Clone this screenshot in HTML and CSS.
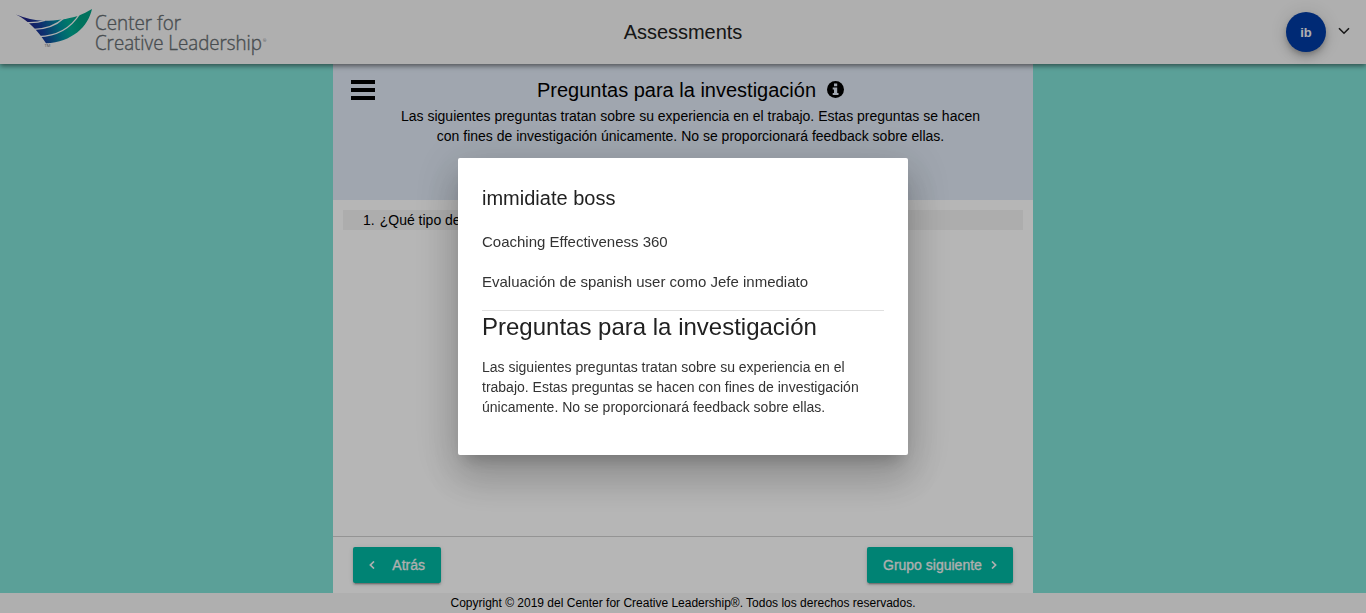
FILE: index.html
```html
<!DOCTYPE html>
<html lang="es">
<head>
<meta charset="utf-8">
<title>Assessments</title>
<link rel="stylesheet" href="styles.css">
</head>
<body>
<div class="app">
  <header class="toolbar">
    <div class="brand">
      <svg class="logo" width="80" height="50" viewBox="12 6 80 50" aria-hidden="true">
        <defs>
          <linearGradient id="wing" gradientUnits="userSpaceOnUse" x1="30" y1="32" x2="78" y2="18">
            <stop offset="0" stop-color="#1f2388"/><stop offset=".25" stop-color="#15409c"/><stop offset=".6" stop-color="#0090a0"/><stop offset=".8" stop-color="#00ab94"/><stop offset="1" stop-color="#00a083"/>
          </linearGradient>
        </defs>
        <path fill="url(#wing)" d="M16 14.6C25 18.5 35 20.6 44 20.8C57 20.6 67 19 77 16.2C83 14 88 11.5 92 9C88 27 72 42 46 43.3C38 31 29 21 16 14.6Z"/>
        <g fill="none" stroke="#f5f5f5" stroke-width="1.4">
          <path d="M24 22.4C32 23 39 22.4 45 20.4"/>
          <path d="M32 29.6C46 29.4 56 25.6 64 18"/>
          <path d="M38.5 36.6C56 36.2 70 29.5 80 13.5"/>
        </g>
        <text class="logo-tm" x="44.5" y="47">TM</text>
      </svg>
      <div class="wordmark">
        <svg width="90" height="20" viewBox="0 0 90 20"><text class="logo-word" x="3" y="16.7" textLength="86" lengthAdjust="spacingAndGlyphs">Center for</text></svg>
        <div class="word-row"><svg width="171" height="23" viewBox="0 0 171 23"><text class="logo-word" x="3" y="16.5" textLength="167" lengthAdjust="spacingAndGlyphs">Creative Leadership</text></svg><span class="reg">®</span></div>
      </div>
    </div>
    <h1 class="app-title">Assessments</h1>
    <div class="account">
      <span class="avatar">ib</span>
      <svg class="chevron" width="12" height="8" viewBox="0 0 12 8"><path d="M1 1.2 6 6.2 11 1.2"/></svg>
    </div>
  </header>
  <main class="page">
    <section class="survey">
      <div class="intro">
        <svg class="menu" width="24" height="20" viewBox="0 0 24 20"><path d="M0 2H24M0 10H24M0 18H24"/></svg>
        <div class="intro-text">
          <h2 class="intro-title"><span class="intro-name">Preguntas para la investigación</span>
            <svg class="info" width="17" height="17" viewBox="0 0 17 17"><circle cx="8.5" cy="8.5" r="8.5"/><path fill="#e0e9f5" d="M7 2.5H10.2V5.2H7ZM5.7 6.6H10.2V12H11.5V14H5.7V12H7V8.6H5.7Z"/></svg>
          </h2>
          <p class="intro-copy"><span class="line">Las siguientes preguntas tratan sobre su experiencia en el trabajo. Estas preguntas se hacen</span><span class="line">con fines de investigación únicamente. No se proporcionará feedback sobre ellas.</span></p>
        </div>
      </div>
      <div class="questions">
        <div class="question"><span>1.</span><span>¿Qué tipo de</span></div>
      </div>
      <div class="actions">
        <button class="btn back"><svg width="6" height="8" viewBox="0 0 6 8"><path d="M5 .5 1.4 4 5 7.5"/></svg>Atrás</button>
        <button class="btn next">Grupo siguiente<svg width="6" height="8" viewBox="0 0 6 8"><path d="M1 .5 4.6 4 1 7.5"/></svg></button>
      </div>
    </section>
  </main>
  <footer class="footer"><span>Copyright © 2019 del Center for Creative Leadership®. Todos los derechos reservados.</span></footer>
</div>
<div class="backdrop">
  <div class="dialog" role="dialog">
    <h3 class="dialog-role">immidiate boss</h3>
    <p class="dialog-line">Coaching Effectiveness 360</p>
    <p class="dialog-line">Evaluación de spanish user como Jefe inmediato</p>
    <div class="divider"></div>
    <h2 class="dialog-title">Preguntas para la investigación</h2>
    <p class="dialog-copy">Las siguientes preguntas tratan sobre su experiencia en el<br>trabajo. Estas preguntas se hacen con fines de investigación<br>únicamente. No se proporcionará feedback sobre ellas.</p>
  </div>
</div>
</body>
</html>
```
FILE: styles.css
```css
* { box-sizing: border-box; }
body { margin: 0; overflow: hidden; font-family: "Liberation Sans", Arial, sans-serif; color: #000; }
h1, h2, h3, p { margin: 0; font-weight: 400; }
.app { height: 613px; display: flex; flex-direction: column; background: #80e1d6; }
.toolbar { position: relative; z-index: 1; flex: none; height: 64px; display: grid; grid-template-columns: 1fr auto 1fr; align-items: center; padding: 0 16px; background: #f5f5f5; box-shadow: 0 2px 5px rgba(0,0,0,.5); }
.brand { display: flex; align-items: center; height: 50px; margin: -3px 0 0 -4px; }
.logo { display: block; flex: none; }
.wordmark { height: 50px; display: flex; flex-direction: column; padding-top: 7px; }
.wordmark svg { display: block; overflow: visible; flex: none; }
.word-row { display: flex; align-items: flex-start; }
.logo-word { font: 300 20.5px "Open Sans", sans-serif; fill: #666d71; stroke: #666d71; stroke-width: .4px; }
.logo-tm { font: 4px "Open Sans", sans-serif; fill: #6d7478; }
.reg { font: 4px/6px "Open Sans", sans-serif; color: #6d7478; padding-top: 5px; }
.app-title { font-size: 20px; line-height: 32px; letter-spacing: -.03px; color: #212121; }
.account { display: flex; justify-content: flex-end; align-items: center; gap: 12px; }
.avatar { width: 40px; height: 40px; border-radius: 50%; background: #003ba5; color: #f5f5f5; font-size: 13px; font-weight: 700; line-height: 41px; text-align: center; box-shadow: 0 3px 5px -1px rgba(0,0,0,.2), 0 6px 10px rgba(0,0,0,.14), 0 1px 18px rgba(0,0,0,.12); }
.chevron { fill: none; stroke: #212121; stroke-width: 1.6; margin-top: -3px; }
.page { flex: 1; display: flex; justify-content: center; }
.survey { width: 700px; background: #fff; display: flex; flex-direction: column; }
.intro { height: 136px; background: #e0e9f5; display: grid; grid-template-columns: 42px 1fr; padding: 16px 18px 0; align-items: start; }
.menu { stroke: #000; stroke-width: 4; }
.intro-text { padding-right: 27px; margin-top: -2px; text-align: center; }
.intro-title { display: flex; justify-content: center; align-items: center; gap: 11px; font-size: 20px; line-height: 24px; }
.info { margin-top: -1px; }
.intro-copy { font-size: 14px; line-height: 20px; margin-top: 4px; }
.line { display: block; white-space: nowrap; }
.questions { flex: 1; padding: 10px; }
.question { height: 20px; background: #f3f3f3; padding-left: 20px; display: flex; gap: 5px; font-size: 14px; line-height: 20px; }
.actions { height: 57px; border-top: 1px solid #d0d0d0; padding: 10px 20px; display: flex; justify-content: space-between; }
.btn { height: 36px; border: 0; border-radius: 2px; padding: 0 16px; background: #00b8a3; color: #f5f5f5; font: 14px/36px "Liberation Sans", Arial, sans-serif; -webkit-text-stroke: .3px #f5f5f5; display: flex; align-items: center; box-shadow: 0 3px 1px -2px rgba(0,0,0,.2), 0 2px 2px rgba(0,0,0,.14), 0 1px 5px rgba(0,0,0,.12); }
.btn svg { fill: none; stroke: #f5f5f5; stroke-width: 1.7; }
.back { width: 88px; justify-content: space-between; }
.next { width: 146px; justify-content: space-between; }
.footer { height: 20px; background: #f5f5f5; font-size: 12px; line-height: 20px; text-align: center; white-space: nowrap; }
.backdrop { position: fixed; inset: 0; z-index: 2; background: rgba(0,0,0,.288); display: flex; justify-content: center; align-items: center; }
.dialog { width: 450px; height: 297px; padding: 24px; background: #fff; border-radius: 2px; color: #212121; box-shadow: 0 11px 15px -7px rgba(0,0,0,.2), 0 24px 38px 3px rgba(0,0,0,.14), 0 9px 46px 8px rgba(0,0,0,.12); }
.dialog-role { font-size: 20px; line-height: 32px; margin-bottom: 16px; }
.dialog-line { font-size: 15px; line-height: 24px; margin-bottom: 16px; color: #333; white-space: nowrap; }
.divider { border-top: 1px solid #e0e0e0; }
.dialog-title { font-size: 24px; line-height: 32px; margin-bottom: 14px; white-space: nowrap; }
.dialog-copy { font-size: 14px; line-height: 20px; color: #333; white-space: nowrap; }
```
